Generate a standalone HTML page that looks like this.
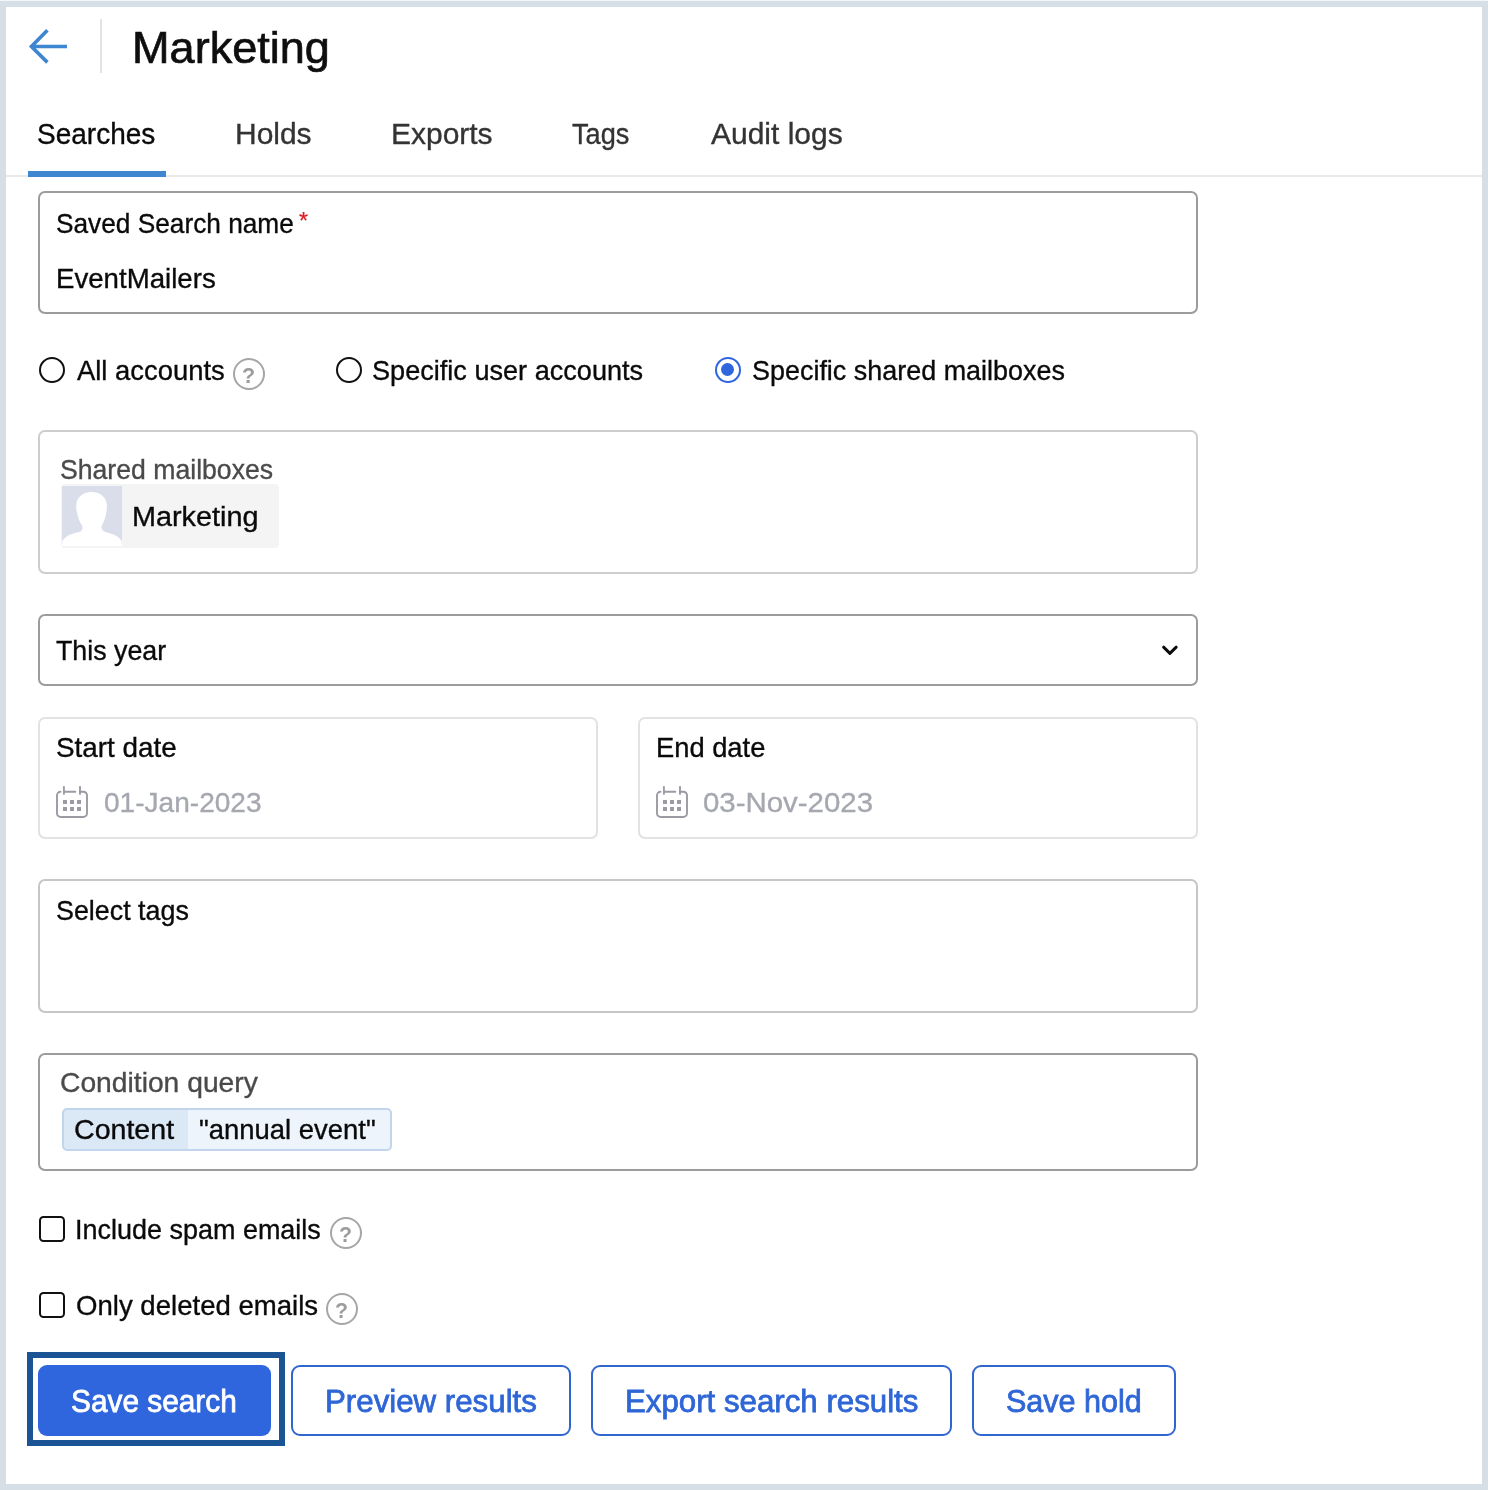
<!DOCTYPE html>
<html lang="en"><head><meta charset="utf-8"><title>Marketing - Searches</title>
<style>
html,body{margin:0;padding:0}
body{width:1488px;height:1490px;position:relative;overflow:hidden;background:#d7dfe6;font-family:'Liberation Sans', sans-serif}
.t{position:absolute;white-space:nowrap;transform-origin:0 0;display:block;-webkit-text-stroke:0.35px}
.a{position:absolute;box-sizing:border-box}
.txt{position:absolute;left:0;top:0;width:1488px;height:1490px;will-change:transform}
</style></head><body>
<div class="a" style="left:6px;top:7px;width:1476px;height:1477px;background:#fff"></div>
<div class="a" style="left:0;top:0;width:1488px;height:1px;background:#f4f7f9"></div>
<!-- header -->
<svg class="a" style="left:20px;top:20px" width="60" height="54" viewBox="20 20 60 54"><path d="M47.4 30.2 L31.4 46.5 L47.4 62.4 M31.4 46.5 H67" fill="none" stroke="#3e86cf" stroke-width="3.6" stroke-linejoin="miter"/></svg>
<div class="a" style="left:100px;top:19px;width:2px;height:54px;background:#e3e3e3"></div>
<!-- tabs -->
<div class="a" style="left:6px;top:175px;width:1476px;height:2px;background:#e9e9e9"></div>
<div class="a" style="left:28px;top:171px;width:138px;height:6px;background:#3e86cf"></div>
<!-- saved search name -->
<div class="a" style="left:38px;top:191px;width:1160px;height:123px;border:2px solid #9c9c9c;border-radius:7px"></div>
<!-- radios -->
<div class="a" style="left:39px;top:356.5px;width:26px;height:26px;border:2px solid #111;border-radius:50%"></div>
<div class="a" style="left:335.5px;top:356.5px;width:26px;height:26px;border:2px solid #111;border-radius:50%"></div>
<div class="a" style="left:714.5px;top:356.5px;width:26px;height:26px;border:2px solid #2f66de;border-radius:50%"></div>
<div class="a" style="left:720.7px;top:362.7px;width:13.6px;height:13.6px;background:#2f66de;border-radius:50%"></div>
<!-- help icons -->
<div class="a h" style="left:233px;top:357.900px"></div>
<div class="a h" style="left:330.100px;top:1216.900px"></div>
<div class="a h" style="left:326px;top:1293px"></div>
<!-- shared mailboxes -->
<div class="a" style="left:38px;top:430px;width:1160px;height:144px;border:2px solid #cdcdcd;border-radius:7px"></div>
<div class="a" style="left:60.5px;top:484px;width:218.5px;height:64px;background:#f4f4f4;border-radius:4px"></div>
<svg class="a" style="left:62px;top:486px" width="60" height="60" viewBox="0 0 60 60"><rect width="60" height="60" fill="#d9deea"/><path d="M29.600 5.900C38 5.900 44.900 11 44.900 20C44.900 26 43.500 31 42 35C41 37.500 40 39 39.500 40.300C39.300 43 40.500 44.800 42.500 45.700C47 47 53 48.500 56 51C58.500 53 60 55 60 57V60H0V57C0 55 1.500 53 4 51C7 48.500 13 47 18.300 45.700C20 44.800 20.800 43 20.400 40.300C20 39 18.500 37.500 17.500 35C16 31 14.200 26 14.200 20C14.200 11 21 5.900 29.600 5.900Z" fill="#fff"/></svg>
<!-- select -->
<div class="a" style="left:38px;top:614px;width:1160px;height:72px;border:2px solid #9c9c9c;border-radius:7px"></div>
<svg class="a" style="left:1158px;top:640px" width="24" height="20" viewBox="1158 640 24 20"><path d="M1163.6 647.200 L1169.900 653.300 L1176.200 647.200" fill="none" stroke="#0c0c0c" stroke-width="3" stroke-linecap="round" stroke-linejoin="round"/></svg>
<!-- dates -->
<div class="a" style="left:38px;top:716.5px;width:560px;height:122px;border:2px solid #e2e2e2;border-radius:7px"></div>
<div class="a" style="left:638px;top:716.5px;width:560px;height:122px;border:2px solid #e2e2e2;border-radius:7px"></div>
<svg class="a cal" style="left:56px;top:786px" width="32" height="32" viewBox="0 0 32 32"><path d="M4.500 5.700A3.600 3.600 0 0 0 1 9.300V27.400A3.600 3.600 0 0 0 4.600 31H27.400A3.600 3.600 0 0 0 31 27.400V9.300A3.600 3.600 0 0 0 27.400 5.700H24M7.900 0.900V7.900M24 0.900V7.900M7.900 5.700H19.300" fill="none" stroke="#9a9ba3" stroke-width="1.900" stroke-linecap="round"/><path d="M7 14.100h4v4H7zM14 14.100h4v4h-4zM21 14.100h4v4h-4zM7 21h4v4H7zM14 21h4v4h-4zM21 21h4v4h-4z" fill="#9a9ba3"/></svg>
<svg class="a cal" style="left:656px;top:786px" width="32" height="32" viewBox="0 0 32 32"><path d="M4.500 5.700A3.600 3.600 0 0 0 1 9.300V27.400A3.600 3.600 0 0 0 4.600 31H27.400A3.600 3.600 0 0 0 31 27.400V9.300A3.600 3.600 0 0 0 27.400 5.700H24M7.900 0.900V7.900M24 0.900V7.900M7.900 5.700H19.300" fill="none" stroke="#9a9ba3" stroke-width="1.900" stroke-linecap="round"/><path d="M7 14.100h4v4H7zM14 14.100h4v4h-4zM21 14.100h4v4h-4zM7 21h4v4H7zM14 21h4v4h-4zM21 21h4v4h-4z" fill="#9a9ba3"/></svg>
<!-- select tags -->
<div class="a" style="left:38px;top:879px;width:1160px;height:134px;border:2px solid #c6c6c6;border-radius:7px"></div>
<!-- condition -->
<div class="a" style="left:38px;top:1053px;width:1160px;height:118px;border:2px solid #9c9c9c;border-radius:7px"></div>
<div class="a" style="left:62px;top:1107.500px;width:330px;height:43.500px;border:2px solid #c1d6ed;border-radius:5px;background:linear-gradient(90deg,#dbe8f5 0,#dbe8f5 124px,#eef4fb 124px,#eef4fb 100%)"></div>
<!-- checkboxes -->
<div class="a" style="left:39px;top:1216px;width:26px;height:26px;border:2px solid #111;border-radius:4.500px"></div>
<div class="a" style="left:39px;top:1291.500px;width:26px;height:26px;border:2px solid #111;border-radius:4.500px"></div>
<!-- buttons -->
<div class="a" style="left:27px;top:1352px;width:258px;height:94px;border:6px solid #1b5494"></div>
<div class="a" style="left:38px;top:1365px;width:233px;height:71px;background:#2f66de;border-radius:9px"></div>
<div class="a" style="left:291px;top:1365px;width:279.500px;height:70.500px;border:2px solid #2f66d0;border-radius:9px"></div>
<div class="a" style="left:591px;top:1365px;width:360.500px;height:70.500px;border:2px solid #2f66d0;border-radius:9px"></div>
<div class="a" style="left:972px;top:1365px;width:203.500px;height:70.500px;border:2px solid #2f66d0;border-radius:9px"></div>
<style>
.h{width:32px;height:32px;border:2px solid #a6a6a6;border-radius:50%}
</style>

<div class="txt">
<span class="t" style="left:131.93px;top:26.75px;font-size:43.5px;line-height:43.5px;color:#0e0e0e;-webkit-text-stroke:0.65px;transform:scaleX(1.0364)">Marketing</span>
<span class="t" style="left:37.13px;top:118.75px;font-size:30px;line-height:30px;color:#0a0a0a;transform:scaleX(0.9333)">Searches</span>
<span class="t" style="left:235.05px;top:118.75px;font-size:30px;line-height:30px;color:#333333;transform:scaleX(0.9986)">Holds</span>
<span class="t" style="left:390.65px;top:118.75px;font-size:30px;line-height:30px;color:#333333;transform:scaleX(0.9990)">Exports</span>
<span class="t" style="left:572.45px;top:118.75px;font-size:30px;line-height:30px;color:#333333;transform:scaleX(0.9048)">Tags</span>
<span class="t" style="left:710.60px;top:118.75px;font-size:30px;line-height:30px;color:#333333;transform:scaleX(0.9996)">Audit logs</span>
<span class="t" style="left:55.86px;top:209.55px;font-size:28px;line-height:28px;color:#0a0a0a;transform:scaleX(0.9372)">Saved Search name</span>
<span class="t" style="left:55.63px;top:264.55px;font-size:28px;line-height:28px;color:#0a0a0a;transform:scaleX(0.9868)">EventMailers</span>
<span class="t" style="left:76.60px;top:357.35px;font-size:28px;line-height:28px;color:#0a0a0a;transform:scaleX(0.9787)">All accounts</span>
<span class="t" style="left:372.43px;top:357.35px;font-size:28px;line-height:28px;color:#0a0a0a;transform:scaleX(0.9678)">Specific user accounts</span>
<span class="t" style="left:751.54px;top:357.35px;font-size:28px;line-height:28px;color:#0a0a0a;transform:scaleX(0.9620)">Specific shared mailboxes</span>
<span class="t" style="left:60.05px;top:456.25px;font-size:28px;line-height:28px;color:#4a4a4a;transform:scaleX(0.9507)">Shared mailboxes</span>
<span class="t" style="left:131.67px;top:504.15px;font-size:27px;line-height:27px;color:#0a0a0a;transform:scaleX(1.0670)">Marketing</span>
<span class="t" style="left:55.72px;top:637.25px;font-size:28px;line-height:28px;color:#0a0a0a;transform:scaleX(0.9567)">This year</span>
<span class="t" style="left:55.61px;top:734.45px;font-size:28px;line-height:28px;color:#0a0a0a;transform:scaleX(0.9945)">Start date</span>
<span class="t" style="left:655.55px;top:734.45px;font-size:28px;line-height:28px;color:#0a0a0a;transform:scaleX(0.9752)">End date</span>
<span class="t" style="left:103.60px;top:789.45px;font-size:28px;line-height:28px;color:#a6a8b0;transform:scaleX(1.0023)">01-Jan-2023</span>
<span class="t" style="left:703.45px;top:789.45px;font-size:28px;line-height:28px;color:#a6a8b0;transform:scaleX(1.0504)">03-Nov-2023</span>
<span class="t" style="left:55.64px;top:897.15px;font-size:28px;line-height:28px;color:#0a0a0a;transform:scaleX(0.9587)">Select tags</span>
<span class="t" style="left:59.64px;top:1068.95px;font-size:28px;line-height:28px;color:#4a4a4a;transform:scaleX(1.0087)">Condition query</span>
<span class="t" style="left:73.70px;top:1116.25px;font-size:27.5px;line-height:27.5px;color:#0a0a0a;transform:scaleX(1.0389)">Content</span>
<span class="t" style="left:198.50px;top:1116.25px;font-size:27.5px;line-height:27.5px;color:#0a0a0a;transform:scaleX(0.9983)">&quot;annual event&quot;</span>
<span class="t" style="left:75.39px;top:1216.25px;font-size:28px;line-height:28px;color:#0a0a0a;transform:scaleX(0.9631)">Include spam emails</span>
<span class="t" style="left:75.77px;top:1292.05px;font-size:28px;line-height:28px;color:#0a0a0a;transform:scaleX(0.9846)">Only deleted emails</span>
<span class="t" style="left:71.47px;top:1385.35px;font-size:32px;line-height:32px;color:#ffffff;-webkit-text-stroke:0.8px;transform:scaleX(0.9318)">Save search</span>
<span class="t" style="left:324.80px;top:1385.35px;font-size:32px;line-height:32px;color:#2f66d6;-webkit-text-stroke:0.8px;transform:scaleX(0.9766)">Preview results</span>
<span class="t" style="left:624.90px;top:1385.35px;font-size:32px;line-height:32px;color:#2f66d6;-webkit-text-stroke:0.8px;transform:scaleX(0.9761)">Export search results</span>
<span class="t" style="left:1006.15px;top:1385.35px;font-size:32px;line-height:32px;color:#2f66d6;-webkit-text-stroke:0.8px;transform:scaleX(0.9538)">Save hold</span>
<span class="t" style="left:298.66px;top:208.80px;font-size:24px;line-height:24px;color:#e0181f;-webkit-text-stroke:0.2px;transform:scaleX(0.9714)">*</span>
<span class="t" style="left:242.02px;top:364.90px;font-size:22px;line-height:22px;color:#9c9c9c;font-weight:700;-webkit-text-stroke:0;transform:scaleX(0.9778)">?</span>
<span class="t" style="left:339.13px;top:1223.80px;font-size:22px;line-height:22px;color:#9c9c9c;font-weight:700;-webkit-text-stroke:0;transform:scaleX(0.9689)">?</span>
<span class="t" style="left:335.13px;top:1299.90px;font-size:22px;line-height:22px;color:#9c9c9c;font-weight:700;-webkit-text-stroke:0;transform:scaleX(0.9689)">?</span>
</div>
</body></html>
